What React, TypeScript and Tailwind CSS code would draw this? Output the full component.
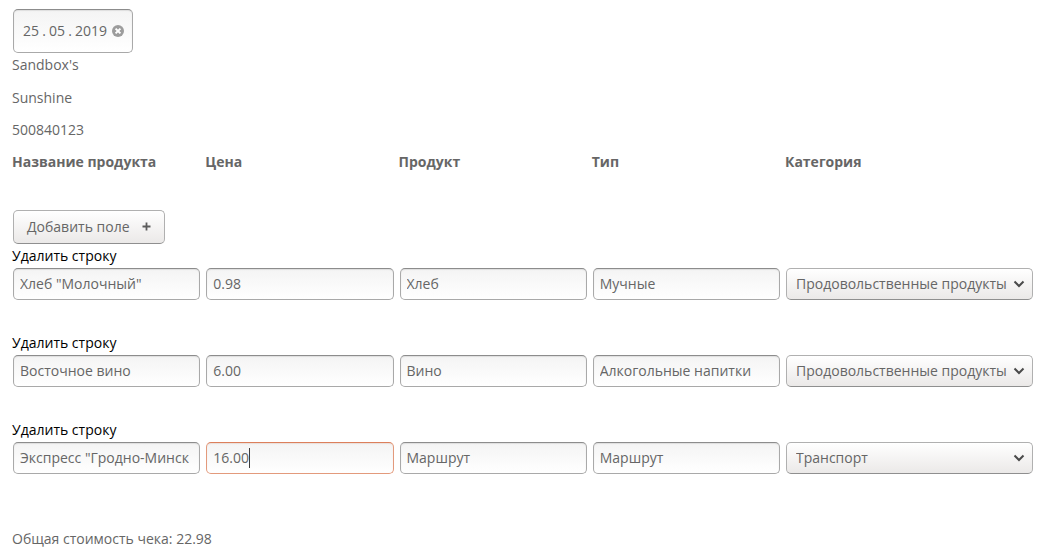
import { useState } from "react";

type Item = { name: string; price: string; product: string; type: string; category: string };

const initialItems: Item[] = [
  { name: 'Хлеб "Молочный"', price: "0.98", product: "Хлеб", type: "Мучные", category: "Продовольственные продукты" },
  { name: "Восточное вино", price: "6.00", product: "Вино", type: "Алкогольные напитки", category: "Продовольственные продукты" },
  { name: 'Экспресс "Гродно-Минск"', price: "16.00", product: "Маршрут", type: "Маршрут", category: "Транспорт" },
];

const textColumns: { key: keyof Item; title: string }[] = [
  { key: "name", title: "Название продукта" },
  { key: "price", title: "Цена" },
  { key: "product", title: "Продукт" },
  { key: "type", title: "Тип" },
];

const rowGrid = "grid grid-cols-[repeat(4,minmax(0,1fr))_247px] gap-x-1.5";

const fieldBase =
  "block h-8 w-full rounded-[5px] border bg-linear-to-b from-[#f4f4f4] to-white pr-2.5 pb-0.5 pl-1.5 text-[#666] caret-transparent outline-none";
const fieldNormal = "border-[#a9a9a9] border-t-[#8c8c8c] shadow-[inset_0_1px_1px_#dedede]";
const fieldActive = "border-[#e39a7c] border-t-[#dc7f5b] shadow-[inset_0_1px_1px_#eadfda]";

function TextField({ id, value, active, onChange }: { id: keyof Item; value: string; active: boolean; onChange: (v: string) => void }) {
  return (
    <div className="relative">
      <input
        type="text"
        aria-labelledby={"col-" + id}
        value={value}
        onChange={(e) => onChange(e.target.value)}
        className={fieldBase + " " + (active ? fieldActive : fieldNormal)}
      />
      {active && (
        <div aria-hidden="true" className="pointer-events-none absolute inset-y-1.5 left-[7px] flex">
          <span className="invisible">{value}</span>
          <span className="w-px bg-[#3c3c3c]" />
        </div>
      )}
    </div>
  );
}

function CategorySelect({ value, onChange }: { value: string; onChange: (v: string) => void }) {
  return (
    <div className="relative">
      <select
        aria-labelledby="col-category"
        value={value}
        onChange={(e) => onChange(e.target.value)}
        className="block h-8 w-full appearance-none rounded-[5px] border border-[#b0b0b0] border-b-[#8f8f8f] bg-linear-to-b from-white to-[#ebe9e8] pr-6 pl-[9px] text-[#666] outline-none"
      >
        <option>Продовольственные продукты</option>
        <option>Транспорт</option>
      </select>
      <svg viewBox="0 0 12 8" aria-hidden="true" className="pointer-events-none absolute top-3 right-2 h-2 w-3">
        <path d="M1.5 1.5 6 6 10.5 1.5" fill="none" stroke="#4a4a4a" strokeWidth="2" />
      </svg>
    </div>
  );
}

export default function App() {
  const [items, setItems] = useState(initialItems);
  const [date, setDate] = useState(["25", "05", "2019"]);
  const update = (row: number, key: keyof Item, value: string) =>
    setItems(items.map((item, i) => (i === row ? { ...item, [key]: value } : item)));
  const setPart = (index: number, value: string) => setDate(date.map((part, i) => (i === index ? value : part)));
  const total = items.reduce((sum, item) => sum + (Number(item.price) || 0), 0);

  return (
    <main className="min-h-screen bg-white pt-[9px] pr-[15px] pb-2 pl-3 font-['Open_Sans','Noto_Sans',sans-serif] text-sm leading-5 text-[#666]">
      <div
        role="group"
        aria-label="Дата"
        className="ml-px flex h-11 w-[120px] items-center rounded-[5px] border border-[#a9a9a9] border-t-[#8c8c8c] bg-linear-to-b from-[#f4f4f4] to-white pl-[9px] shadow-[inset_0_1px_1px_#dedede]"
      >
        <input aria-label="День" value={date[0]} onChange={(e) => setPart(0, e.target.value)} className="w-4 outline-none" />
        <span className="w-2.5 text-center">.</span>
        <input aria-label="Месяц" value={date[1]} onChange={(e) => setPart(1, e.target.value)} className="w-4 outline-none" />
        <span className="w-2.5 text-center">.</span>
        <input aria-label="Год" value={date[2]} onChange={(e) => setPart(2, e.target.value)} className="w-[33px] outline-none" />
        <button type="button" aria-label="Очистить дату" className="ml-1" onClick={() => setDate(["", "", ""])}>
          <svg viewBox="0 0 12 12" className="block size-3">
            <circle cx="6" cy="6" r="6" fill="#9c9c9c" />
            <path d="M3.6 3.6 8.4 8.4M8.4 3.6 3.6 8.4" stroke="#fff" strokeWidth="2" />
          </svg>
        </button>
      </div>

      <div className="pt-0.5">
        <p className="mb-[13px]">Sandbox's</p>
        <p className="mb-3">Sunshine</p>
        <p className="mb-3">500840123</p>
        <div className={rowGrid + " pr-px font-bold"}>
          {textColumns.map((column) => (
            <span key={column.key} id={"col-" + column.key}>
              {column.title}
            </span>
          ))}
          <span id="col-category">Категория</span>
        </div>
      </div>

      <button
        type="button"
        onClick={() => setItems([...items, { name: "", price: "", product: "", type: "", category: "Транспорт" }])}
        className="mt-[38px] ml-px flex h-[34px] items-center gap-3 rounded-[5px] border border-[#b0b0b0] border-b-[#8f8f8f] bg-linear-to-b from-white to-[#ebe9e8] px-[13px]"
      >
        Добавить поле
        <svg viewBox="0 0 9 9" aria-hidden="true" className="mb-0.5 size-[9px]">
          <path d="M4.5 0.5v8M0.5 4.5h8" stroke="#5c5c5c" strokeWidth="1.8" />
        </svg>
      </button>

      <div className="flex flex-col gap-[33px] pt-0.5">
        {items.map((item, row) => (
          <div key={row}>
            <button type="button" className="block text-black" onClick={() => setItems(items.filter((_, i) => i !== row))}>
              Удалить строку
            </button>
            <div className={rowGrid + " mt-0.5 pl-px"}>
              {textColumns.map(({ key }) => (
                <TextField key={key} id={key} value={item[key]} active={row === 2 && key === "price"} onChange={(v) => update(row, key, v)} />
              ))}
              <CategorySelect value={item.category} onChange={(v) => update(row, "category", v)} />
            </div>
          </div>
        ))}
      </div>

      <p className="mt-[55px]">Общая стоимость чека: {total.toFixed(2)}</p>
    </main>
  );
}
